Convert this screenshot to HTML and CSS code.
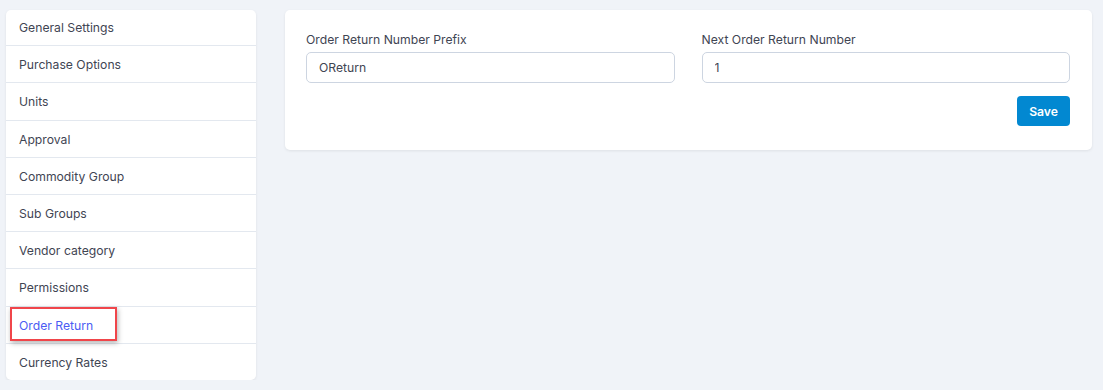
FILE: index.html
```html
<!DOCTYPE html>
<html lang="en">
<head>
  <meta charset="UTF-8">
  <title>Purchase Settings</title>
  <link rel="stylesheet" href="styles.css">
</head>
<body>
  <div class="page">
    <ul class="menu">
      <li><a href="#">General Settings</a></li>
      <li><a href="#">Purchase Options</a></li>
      <li><a href="#">Units</a></li>
      <li><a href="#">Approval</a></li>
      <li><a href="#">Commodity Group</a></li>
      <li><a href="#">Sub Groups</a></li>
      <li><a href="#">Vendor category</a></li>
      <li><a href="#">Permissions</a></li>
      <li class="active"><a href="#">Order Return</a><span class="mark"></span></li>
      <li><a href="#">Currency Rates</a></li>
    </ul>
    <div class="card">
      <div class="fields">
        <div class="field">
          <label>Order Return Number Prefix</label>
          <input type="text" value="OReturn">
        </div>
        <div class="field">
          <label>Next Order Return Number</label>
          <input type="text" value="1">
        </div>
      </div>
      <div class="actions">
        <button class="save">Save</button>
      </div>
    </div>
  </div>
</body>
</html>
```

FILE: styles.css
```css
body { font-family: Inter, sans-serif; margin: 0; background: #f0f3f8; color: #3f4553; font-size: 12.2px; }
.page { display: flex; align-items: flex-start; gap: 29px; padding: 10px 11px 0 6px; }
.menu { list-style: none; margin: 0; padding: 0; width: 250px; flex-shrink: 0; background: #fff; border-radius: 5px; box-shadow: 0 1px 3px rgba(0,0,0,0.08); }
.menu li { position: relative; height: 36.2px; line-height: 38px; border-bottom: 1px solid #e3e8ef; padding-left: 13px; }
.menu li:first-child { height: 35.2px; line-height: 35px; }
.menu li:last-child { border-bottom: none; }
.menu a { text-decoration: none; color: #3f4553; }
.menu li.active a { color: #4b5cf3; }
.mark { position: absolute; left: 4px; top: 0; width: 103px; height: 30px; border: 2px solid #f0454a; box-shadow: 1px 2px 5px rgba(0,0,0,0.3); }
.card { flex: 1; background: #fff; border-radius: 5px; box-shadow: 0 1px 3px rgba(0,0,0,0.08); padding: 22px 22px 24px 21px; }
.fields { display: grid; grid-template-columns: 1fr 1fr; gap: 27px; }
.field label { display: block; margin-bottom: 4px; line-height: 16px; }
.field input { box-sizing: border-box; width: 100%; height: 31px; border: 1px solid #cdd5e1; border-radius: 5px; padding: 0 12px; font: inherit; color: #3f4553; }
.actions { display: flex; justify-content: flex-end; margin-top: 13px; }
.save { background: #0288d1; color: #fff; border: none; border-radius: 4px; height: 30px; padding: 0 12px; font: inherit; font-weight: 600; cursor: pointer; }
```
